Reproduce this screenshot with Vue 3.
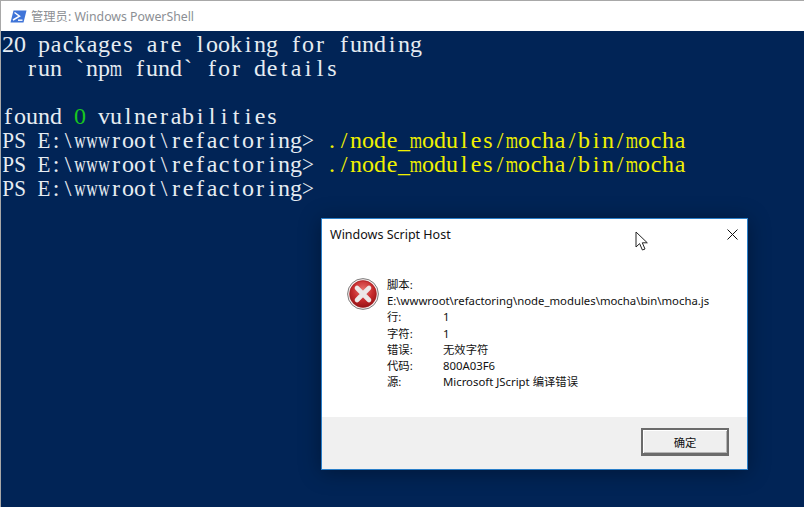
<script setup>
const fit = (c) => {
  if (/[mwMW]/.test(c)) return ' wide'
  if (/[PESRA>]/.test(c)) return ' cap'
  return ''
}
const cells = (text, cls = '') => [...text].map((c) => ({ c, cls: cls + fit(c) }))
const prompt = 'PS E:\\wwwroot\\refactoring>'
const cmd = ' ./node_modules/mocha/bin/mocha'
const termLines = [
  cells('20 packages are looking for funding'),
  cells('  run `npm fund` for details'),
  cells(' '),
  [...cells('found '), ...cells('0', 'green'), ...cells(' vulnerabilities')],
  [...cells(prompt), ...cells(cmd, 'yellow')],
  [...cells(prompt), ...cells(cmd, 'yellow')],
  cells(prompt)
]
const rows = [
  { k: '行:', v: '1' },
  { k: '字符:', v: '1' },
  { k: '错误:', v: '无效字符' },
  { k: '代码:', v: '800A03F6' },
  { k: '源:', v: 'Microsoft JScript 编译错误' }
]
</script>

<template>
  <div class="window">
    <header class="titlebar">
      <svg class="ps-icon" width="17" height="13" viewBox="0 0 17 13">
        <path d="M3.5 0.5H16.5L13.5 12.5H0.5Z" fill="#3f74d8" />
        <path d="M4.5 2.5L9.5 6.2L3 10" fill="none" stroke="#fff" stroke-width="1.5" />
        <path d="M8 10.2H12.5" stroke="#fff" stroke-width="1.4" />
      </svg>
      <span class="title">管理员: Windows PowerShell</span>
    </header>
    <main class="terminal">
      <div v-for="(l, i) in termLines" :key="i" class="line">
        <span v-for="(g, j) in l" :key="j" class="cell" :class="g.cls">{{ g.c }}</span>
      </div>
    </main>

    <section class="dialog">
      <div class="dlg-head">
        <span>Windows Script Host</span>
        <svg class="close" width="11" height="11" viewBox="0 0 11 11">
          <path d="M0.5 0.5L10.5 10.5M10.5 0.5L0.5 10.5" stroke="#111" stroke-width="1" fill="none" />
        </svg>
      </div>
      <div class="dlg-body">
        <svg class="err" width="32" height="32" viewBox="0 0 32 32">
          <defs>
            <radialGradient id="redg" cx="50%" cy="35%" r="70%">
              <stop offset="0" stop-color="#e8736f" />
              <stop offset="0.55" stop-color="#c62a2c" />
              <stop offset="1" stop-color="#8d1013" />
            </radialGradient>
          </defs>
          <circle cx="16" cy="16" r="15.4" fill="#f4e8e8" stroke="#7f7f7f" stroke-width="1" />
          <circle cx="16" cy="16" r="13.4" fill="url(#redg)" stroke="#a11a1c" stroke-width="0.6" />
          <path d="M10 10L22 22M22 10L10 22" stroke="#ece8e8" stroke-width="4.6" stroke-linecap="round" />
        </svg>
        <div class="msg">
          <div>脚本:</div>
          <div>E:\wwwroot\refactoring\node_modules\mocha\bin\mocha.js</div>
          <div v-for="r in rows" :key="r.k" class="row">
            <span class="key">{{ r.k }}</span><span>{{ r.v }}</span>
          </div>
        </div>
      </div>
      <div class="dlg-foot">
        <button class="ok" type="button">确定</button>
      </div>
    </section>

    <svg class="cursor" width="14" height="21" viewBox="0 0 14 21">
      <path d="M1 1V16L4.6 12.6L7.4 19L10 18L7.3 11.8H12.3Z" fill="#fff" stroke="#222" stroke-width="1" />
    </svg>
  </div>
</template>

<style scoped>
.window {
  position: relative;
  width: 804px;
  height: 507px;
  overflow: hidden;
  box-sizing: border-box;
  border-top: 1px solid #a8a8a8;
  border-left: 1px solid #a8a8a8;
  background: #012456;
  display: flex;
  flex-direction: column;
}
.titlebar {
  height: 30px;
  flex: none;
  background: #fff;
  display: flex;
  align-items: center;
  padding-left: 9px;
  gap: 4px;
}
.ps-icon { flex: none; }
.title {
  font: 12.3px "Noto Sans", "Noto Sans CJK SC", sans-serif;
  color: #8c8f94;
}
.terminal {
  flex: 1;
  padding-top: 1px;
  padding-left: 1px;
  font: 24px/24px "Liberation Serif", serif;
  color: #e6ecf2;
}
.line { height: 24px; display: flex; }
.cell {
  flex: none;
  width: 12px;
  height: 24px;
  display: flex;
  justify-content: center;
  white-space: pre;
}
.wide { transform: scaleX(0.66); }
.cap { transform: scaleX(0.88); }
.green { color: #19c61e; }
.yellow { color: #f0f000; }
.dialog {
  position: absolute;
  left: 320px;
  top: 217px;
  width: 427px;
  height: 252px;
  box-sizing: border-box;
  border: 1px solid #2a7fc9;
  background: #fff;
  display: flex;
  flex-direction: column;
  box-shadow: 0 2px 20px rgba(0, 0, 0, 0.35);
  font: 11.35px "Noto Sans", "Noto Sans CJK SC", sans-serif;
  color: #111;
}
.dlg-head {
  height: 30px;
  flex: none;
  display: flex;
  align-items: center;
  justify-content: space-between;
  padding: 0 9px 0 8px;
  font-size: 12.5px;
}
.dlg-body {
  flex: 1;
  display: flex;
  align-items: flex-start;
  padding: 28px 0 0 25px;
  gap: 8px;
}
.err { flex: none; margin-top: 1px; }
.msg { line-height: 16.2px; }
.row { display: flex; }
.key { width: 56px; flex: none; }
.dlg-foot {
  height: 52px;
  box-sizing: border-box;
  flex: none;
  background: #f0f0f0;
  display: flex;
  justify-content: flex-end;
  align-items: flex-start;
  padding: 11px 18px 0 0;
}
.ok {
  width: 88px;
  height: 28px;
  padding: 0;
  box-sizing: border-box;
  background: #efefef;
  border: 2px solid #6b6b6b;
  border-bottom-width: 3px;
  box-shadow: inset 1px 1px 0 #fff, inset -1px -1px 0 #b5b5b5;
  font: 11.35px "Noto Sans CJK SC", sans-serif;
  color: #111;
}
.close { flex: none; }
.cursor {
  position: absolute;
  left: 634px;
  top: 230px;
}
</style>
